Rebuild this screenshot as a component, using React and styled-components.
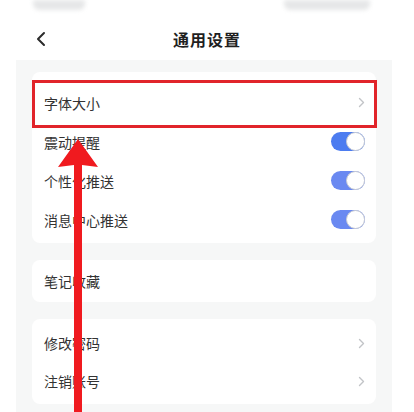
import React from "react";
import styled, { createGlobalStyle } from "styled-components";

// ================= Global =================
const GlobalStyle = createGlobalStyle`
  body {
    margin: 0;
    background: #fff;
    font-family: "Noto Sans CJK SC", "Noto Sans", sans-serif;
  }
`;

// ================= Layout =================
const Page = styled.div`
  position: relative;
  width: 414px;
  height: 412px;
  overflow: hidden;
  background: #fff;
`;

const StatusBar = styled.div`
  height: 18px;
  display: flex;
  justify-content: space-between;
  padding: 0 44px 0 33px;
  box-sizing: border-box;
`;

const Blob = styled.div`
  width: ${({ w }) => w}px;
  height: 10px;
  border-radius: 0 0 6px 6px;
  background: #e6e7e8;
  filter: blur(2px);
`;

const NavBar = styled.div`
  position: relative;
  height: 42px;
  display: flex;
  align-items: center;
  justify-content: center;
`;

const BackButton = styled.div`
  position: absolute;
  left: 35px;
  top: 13px;
  display: flex;
`;

const NavTitle = styled.div`
  font-size: 16px;
  font-weight: 600;
  color: #1f1f1f;
  letter-spacing: 1px;
`;

const Panel = styled.div`
  margin: 0 22px 0 16px;
  padding: 12px 16px;
  background: #f6f7f7;
  display: flex;
  flex-direction: column;
  gap: 17px;
  min-height: 400px;
`;

const Card = styled.div`
  background: #fff;
  border-radius: 8px;
  padding: ${({ pad }) => pad};
  display: flex;
  flex-direction: column;
`;

const Row = styled.div`
  position: relative;
  height: ${({ h }) => h || 39}px;
  display: flex;
  align-items: center;
  justify-content: space-between;
  padding: 0 11px 0 12px;
  font-size: 14px;
  color: #333;

  ${({ highlighted }) =>
    highlighted &&
    `
    &::after {
      content: "";
      position: absolute;
      left: 0;
      right: -1px;
      top: -3px;
      bottom: -6px;
      border: 3px solid #e1242a;
      box-sizing: border-box;
    }
  `}
`;

const Toggle = styled.div`
  width: 34px;
  height: 19px;
  border-radius: 10px;
  background: ${({ color }) => color};
  position: relative;

  &::after {
    content: "";
    position: absolute;
    right: 0;
    top: 0;
    width: 17px;
    height: 17px;
    border-radius: 50%;
    background: #fff;
    border: 1px solid #c9ccd3;
  }
`;

const Arrow = styled.svg`
  position: absolute;
  left: 56px;
  top: 139px;
`;

// ================= Parts =================
const Chevron = () => (
  <svg width="7" height="11" viewBox="0 0 7 11">
    <path d="M1.5 1.5 L5.5 5.5 L1.5 9.5" fill="none" stroke="#c2c4c7" strokeWidth="1.4" strokeLinecap="round" strokeLinejoin="round" />
  </svg>
);

const App = () => (
  <Page>
    <GlobalStyle />
    <StatusBar>
      <Blob w={52} />
      <Blob w={86} />
    </StatusBar>

    <NavBar>
      <BackButton>
        <svg width="12" height="16" viewBox="0 0 12 16">
          <path d="M9 2 L3 8 L9 14" fill="none" stroke="#2b2b2b" strokeWidth="2" strokeLinecap="round" strokeLinejoin="round" />
        </svg>
      </BackButton>
      <NavTitle>通用设置</NavTitle>
    </NavBar>

    <Panel>
      <Card pad="11px 0 4px">
        <Row highlighted>
          字体大小
          <Chevron />
        </Row>
        <Row>
          震动提醒
          <Toggle color="#4c7cf0" />
        </Row>
        <Row>
          个性化推送
          <Toggle color="#6a89f1" />
        </Row>
        <Row>
          消息中心推送
          <Toggle color="#6a89f1" />
        </Row>
      </Card>

      <Card pad="0">
        <Row h={42}>笔记收藏</Row>
      </Card>

      <Card pad="5px 0 4px">
        <Row h={38}>
          修改密码
          <Chevron />
        </Row>
        <Row h={38}>
          注销账号
          <Chevron />
        </Row>
      </Card>
    </Panel>

    <Arrow width="44" height="280" viewBox="0 0 44 280">
      <path d="M22 0 L42 28 L26 26 L26 280 L18 280 L18 26 L2 28 Z" fill="#f01a1f" />
    </Arrow>
  </Page>
);

export default App;
